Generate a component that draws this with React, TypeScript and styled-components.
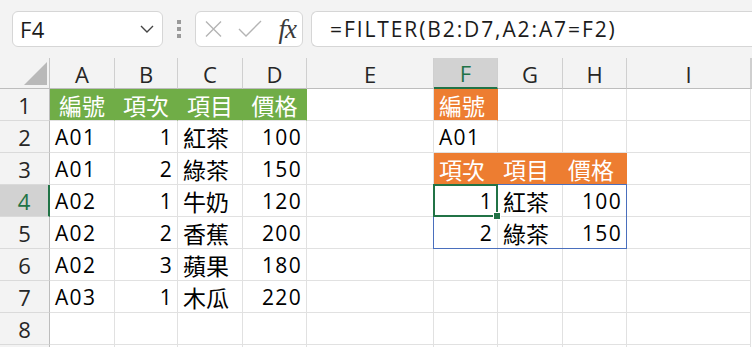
import React from "react";
import styled, { createGlobalStyle } from "styled-components";

const GlobalStyle = createGlobalStyle`
  html, body { margin: 0; padding: 0; background: #fff; overflow: hidden; }
  body { font-family: "Open Sans", "Noto Sans CJK TC", sans-serif; }
`;

const Page = styled.div`
  width: 752px;
  height: 347px;
  overflow: hidden;
  display: flex;
  flex-direction: column;
`;

const Toolbar = styled.div`
  height: 58px;
  flex: none;
  box-sizing: border-box;
  padding: 11px 0 0 12px;
  background: #f3f3f3;
  display: flex;
  align-items: flex-start;
`;

const NameBox = styled.div`
  width: 151px;
  height: 36px;
  box-sizing: border-box;
  border: 1px solid #d6d6d6;
  border-radius: 6px;
  background: #fff;
  display: flex;
  align-items: center;
  justify-content: space-between;
  padding: 0 7px 0 7px;
  font-size: 22px;
  letter-spacing: 0.5px;
  color: #1b1b1b;
`;

const Grip = styled.div`
  width: 32px;
  height: 36px;
  display: flex;
  align-items: center;
  justify-content: center;
`;

const FxBox = styled.div`
  width: 108px;
  height: 36px;
  box-sizing: border-box;
  border: 1px solid #d6d6d6;
  border-radius: 6px;
  background: #fff;
  display: flex;
  align-items: center;
  padding: 0 6px 0 8px;
  gap: 15px;
`;

const FxLabel = styled.span`
  font-family: "Liberation Serif", "DejaVu Serif", serif;
  font-style: italic;
  font-size: 27px;
  color: #3a3a3a;
  margin-left: auto;
  letter-spacing: -1px;
  line-height: 1;
`;

const FormulaBox = styled.div`
  flex: 1;
  margin-left: 8px;
  height: 36px;
  box-sizing: border-box;
  border: 1px solid #d6d6d6;
  border-right: none;
  border-radius: 6px 0 0 6px;
  background: #fff;
  padding-left: 18px;
  font-size: 21px;
  letter-spacing: 1.9px;
  color: #1b1b1b;
  display: flex;
  align-items: center;
`;

const Sheet = styled.div`
  display: grid;
  grid-template-columns: 50px 65px 63px 65px 64px 127px 64px 65px 64px 1fr;
  grid-template-rows: 31px repeat(9, 32px);
`;

type Pos = { $row: number; $col: number };

const Corner = styled.div<Pos>`
  grid-row: ${(p) => p.$row};
  grid-column: ${(p) => p.$col};
  background: #f3f3f3;
  border-right: 1px solid #c6c6c6;
  border-bottom: 1px solid #bdbdbd;
  display: flex;
  align-items: flex-end;
  justify-content: flex-end;
  padding: 0 2px 3px 0;
`;

const ColHead = styled.div<Pos & { $active?: boolean }>`
  grid-row: ${(p) => p.$row};
  grid-column: ${(p) => p.$col};
  box-sizing: border-box;
  background: ${(p) => (p.$active ? "#d2d2d2" : "#f3f3f3")};
  color: ${(p) => (p.$active ? "#217346" : "#262626")};
  border-right: 1px solid #cfcfcf;
  border-bottom: ${(p) => (p.$active ? "2px solid #217346" : "1px solid #bdbdbd")};
  display: flex;
  align-items: center;
  justify-content: center;
  font-size: 22px;
  padding-top: 1px;
`;

const RowHead = styled.div<Pos & { $active?: boolean }>`
  grid-row: ${(p) => p.$row};
  grid-column: ${(p) => p.$col};
  box-sizing: border-box;
  background: ${(p) => (p.$active ? "#d2d2d2" : "#f3f3f3")};
  color: ${(p) => (p.$active ? "#217346" : "#262626")};
  border-right: ${(p) => (p.$active ? "2px solid #217346" : "1px solid #bdbdbd")};
  border-bottom: 1px solid #dadada;
  display: flex;
  align-items: center;
  justify-content: center;
  font-size: 22px;
`;

type Align = "left" | "right" | "center";

const Cell = styled.div<Pos & { $fill?: string; $align: Align; $cjk?: boolean }>`
  grid-row: ${(p) => p.$row};
  grid-column: ${(p) => p.$col};
  box-sizing: border-box;
  min-width: 0;
  background: ${(p) => p.$fill || "#fff"};
  color: ${(p) => (p.$fill ? "#fff" : "#000")};
  border-right: 1px solid ${(p) => p.$fill || "#e1e1e1"};
  border-bottom: 1px solid #e1e1e1;
  display: flex;
  align-items: center;
  justify-content: ${(p) =>
    p.$align === "left" ? "flex-start" : p.$align === "right" ? "flex-end" : "center"};
  padding: 0 ${(p) => (p.$align === "right" ? "4px" : "5px")} 0 5px;
  font-size: ${(p) => (p.$cjk ? "23px" : "21px")};
  font-weight: 400;
  letter-spacing: ${(p) => (p.$cjk ? "0" : "1.3px")};
  white-space: nowrap;
  overflow: hidden;
`;

const SpillFrame = styled.div`
  grid-row: 5 / 7;
  grid-column: 7 / 10;
  margin: -1px 0 0 -1px;
  border: 1px solid #4a6fbd;
  z-index: 2;
  pointer-events: none;
`;

const Selection = styled.div`
  grid-row: 5 / 6;
  grid-column: 7 / 8;
  margin: -1px 0 0 -1px;
  border: 2px solid #217346;
  z-index: 3;
  position: relative;
  pointer-events: none;
`;

const FillHandle = styled.span`
  position: absolute;
  right: -5px;
  bottom: -5px;
  width: 6px;
  height: 6px;
  background: #217346;
  border: 1px solid #fff;
`;

type CellData = { v: string; fill?: string; align?: Align };

const GREEN = "#70ad47";
const ORANGE = "#ed7d31";

const isNum = (s: string) => /^\d+$/.test(s);
const isCjk = (s: string) => /[\u3400-\u9fff]/.test(s);

const rows: (CellData | null)[][] = [
  [
    { v: "編號", fill: GREEN, align: "center" },
    { v: "項次", fill: GREEN, align: "center" },
    { v: "項目", fill: GREEN, align: "center" },
    { v: "價格", fill: GREEN, align: "center" },
    null,
    { v: "編號", fill: ORANGE },
    null,
    null,
    null,
  ],
  [{ v: "A01" }, { v: "1" }, { v: "紅茶" }, { v: "100" }, null, { v: "A01" }, null, null, null],
  [
    { v: "A01" },
    { v: "2" },
    { v: "綠茶" },
    { v: "150" },
    null,
    { v: "項次", fill: ORANGE },
    { v: "項目", fill: ORANGE },
    { v: "價格", fill: ORANGE },
    null,
  ],
  [{ v: "A02" }, { v: "1" }, { v: "牛奶" }, { v: "120" }, null, { v: "1" }, { v: "紅茶" }, { v: "100" }, null],
  [{ v: "A02" }, { v: "2" }, { v: "香蕉" }, { v: "200" }, null, { v: "2" }, { v: "綠茶" }, { v: "150" }, null],
  [{ v: "A02" }, { v: "3" }, { v: "蘋果" }, { v: "180" }, null, null, null, null, null],
  [{ v: "A03" }, { v: "1" }, { v: "木瓜" }, { v: "220" }, null, null, null, null, null],
  [null, null, null, null, null, null, null, null, null],
  [null, null, null, null, null, null, null, null, null],
];

const rowLabels = ["1", "2", "3", "4", "5", "6", "7", "8", ""];

const colLetters = ["A", "B", "C", "D", "E", "F", "G", "H", "I"];

const Chevron = () => (
  <svg width="16" height="10" viewBox="0 0 16 10">
    <polyline points="2,2 8,8 14,2" fill="none" stroke="#444" strokeWidth="1.4" />
  </svg>
);

const Dots = () => (
  <svg width="6" height="20" viewBox="0 0 6 20">
    <rect x="1" y="1" width="4" height="4" fill="#9a9a9a" />
    <rect x="1" y="8" width="4" height="4" fill="#9a9a9a" />
    <rect x="1" y="15" width="4" height="4" fill="#9a9a9a" />
  </svg>
);

const Cross = () => (
  <svg width="19" height="18" viewBox="0 0 19 18">
    <path d="M2 1.5 L17 16.5 M17 1.5 L2 16.5" stroke="#b4b4b4" strokeWidth="1.4" fill="none" />
  </svg>
);

const Check = () => (
  <svg width="24" height="18" viewBox="0 0 24 18">
    <polyline points="1,9 8,16 23,1" stroke="#b4b4b4" strokeWidth="1.4" fill="none" />
  </svg>
);

const CornerTriangle = () => (
  <svg width="23" height="23" viewBox="0 0 23 23">
    <polygon points="23,0 23,23 0,23" fill="#b9b9b9" />
  </svg>
);

export default function App() {
  return (
    <Page>
      <GlobalStyle />
      <Toolbar>
        <NameBox>
          <span>F4</span>
          <Chevron />
        </NameBox>
        <Grip>
          <Dots />
        </Grip>
        <FxBox>
          <Cross />
          <Check />
          <FxLabel>fx</FxLabel>
        </FxBox>
        <FormulaBox>=FILTER(B2:D7,A2:A7=F2)</FormulaBox>
      </Toolbar>
      <Sheet>
        <Corner $row={1} $col={1}>
          <CornerTriangle />
        </Corner>
        {colLetters.map((c, i) => (
          <ColHead key={c} $row={1} $col={i + 2} $active={c === "F"}>
            {c}
          </ColHead>
        ))}
        <ColHead $row={1} $col={11} />
        {rows.map((r, ri) => (
          <React.Fragment key={ri}>
            <RowHead $row={ri + 2} $col={1} $active={ri + 1 === 4}>
              {rowLabels[ri]}
            </RowHead>
            {r.map((c, ci) => (
              <Cell
                key={ci}
                $row={ri + 2}
                $col={ci + 2}
                $fill={c?.fill}
                $cjk={c ? isCjk(c.v) : false}
                $align={c?.align || (c && isNum(c.v) ? "right" : "left")}
              >
                {c?.v}
              </Cell>
            ))}
          </React.Fragment>
        ))}
        <SpillFrame />
        <Selection>
          <FillHandle />
        </Selection>
      </Sheet>
    </Page>
  );
}
